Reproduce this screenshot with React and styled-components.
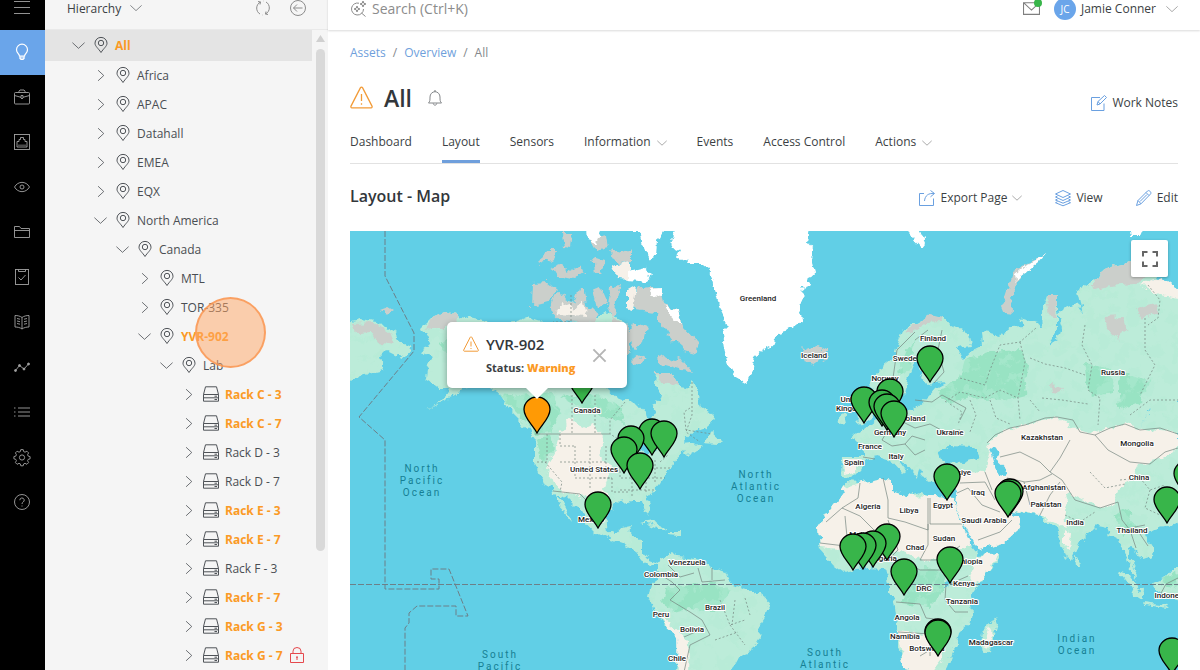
import styled, { createGlobalStyle } from "styled-components";

const GlobalStyle = createGlobalStyle`
  * {
    box-sizing: border-box;
  }

  body {
    margin: 0;
    overflow: hidden;
    background: #fff;
    color: #3b3f44;
    font-family: "Open Sans", "Noto Sans", sans-serif;
    font-size: 12px;
  }

  button, input, select {
    margin: 0;
    padding: 0;
    border: 0;
    background: none;
    color: inherit;
    font: inherit;
  }

  a {
    color: inherit;
    text-decoration: none;
  }

  svg {
    display: block;
    flex: none;
  }
`;

/* The shell starts slightly scrolled, so the bars are cut by the window top. */
const Shell = styled.div`
  display: grid;
  grid-template-columns: 45px 283px 1fr;
  height: calc(100vh + 15px);
  margin-top: -15px;
`;

const Rail = styled.nav`
  display: flex;
  flex-direction: column;
  background: #000;
`;

const RailButton = styled.button`
  display: flex;
  align-items: center;
  justify-content: center;
  height: 45px;
  padding: 0 2px 2px 0;
  background: ${(props) => (props.$active ? "#6aa5ea" : "transparent")};
  color: ${(props) => (props.$active ? "#fff" : "#a3a3a3")};
`;

const Sidebar = styled.aside`
  display: flex;
  flex-direction: column;
  min-height: 0;
  background: #f5f5f5;
`;

const SidebarHeader = styled.div`
  display: flex;
  align-items: center;
  flex: none;
  height: 45px;
  padding: 2px 22px 0;
  border-bottom: 1px solid #e9e9e9;
`;

const ViewSelect = styled.select`
  appearance: none;
  margin-right: 8px;
`;

const HeaderTools = styled.div`
  display: flex;
  gap: 19px;
  margin-left: auto;
  color: #8b8b8b;
`;

const SidebarBody = styled.div`
  display: flex;
  flex: 1;
  min-height: 0;
`;

const Tree = styled.ul`
  flex: 1;
  margin: 0;
  padding: 0;
  list-style: none;
  overflow: hidden;
`;

const TreeRow = styled.button`
  display: flex;
  align-items: center;
  width: 100%;
  height: ${(props) => (props.$selected ? 31 : 29)}px;
  padding-left: ${(props) => 27 + props.$depth * 22}px;
  padding-bottom: 1px;
  background: ${(props) => (props.$selected ? "#e4e4e4" : "transparent")};
  color: ${(props) => (props.$warning ? "#fb9a25" : "#4a4e53")};
  font-weight: ${(props) => (props.$warning ? 700 : 400)};
  white-space: nowrap;

  svg {
    color: #4f5358;
  }
`;

const RowIcon = styled.span`
  margin: 0 6px 0 8px;
`;

const LockIcon = styled.span`
  margin-left: 6px;

  svg {
    color: #e5484d;
  }
`;

const ScrollTrack = styled.div`
  display: flex;
  flex-direction: column;
  align-items: center;
  width: 16px;
  padding-top: 5px;
`;

const ScrollThumb = styled.div`
  width: 9px;
  height: 79%;
  margin-top: 7px;
  border-radius: 5px;
  background: #d9d9d9;
`;

const Main = styled.main`
  display: flex;
  flex-direction: column;
  min-width: 0;
`;

const TopBar = styled.header`
  display: flex;
  align-items: center;
  flex: none;
  height: 45px;
  padding: 2px 22px 0;
  box-shadow: 0 1px 2px rgba(0, 0, 0, 0.15);
`;

const SearchLabel = styled.label`
  display: flex;
  align-items: center;
  flex: 1;
  gap: 6px;
  color: #8c8c8c;
`;

const SearchInput = styled.input`
  flex: 1;
  font-size: 14px;
  outline: 0;

  &::placeholder {
    color: #8c8c8c;
    opacity: 1;
  }
`;

const MailButton = styled.button`
  position: relative;
  margin-right: 14px;
  color: #7f7f7f;

  &::after {
    content: "";
    position: absolute;
    top: -1px;
    right: -2px;
    width: 8px;
    height: 8px;
    border-radius: 50%;
    background: #38b54a;
  }
`;

const UserButton = styled.button`
  display: flex;
  align-items: center;
  gap: 5px;

  svg {
    margin-left: 5px;
    color: #8b8b8b;
  }
`;

const Avatar = styled.span`
  display: flex;
  align-items: center;
  justify-content: center;
  width: 22px;
  height: 22px;
  border-radius: 50%;
  background: #6aa5ea;
  color: #fff;
  font-size: 10px;
`;

const Content = styled.div`
  display: flex;
  flex: 1;
  flex-direction: column;
  min-height: 0;
  padding: 13px 22px 0;
`;

const Breadcrumbs = styled.nav`
  display: flex;
  gap: 7px;
  height: 20px;
  line-height: 20px;
  color: #85888b;

  a {
    color: #6f9fdc;
  }
`;

const TitleRow = styled.div`
  display: flex;
  align-items: center;
  height: 69px;
`;

const Title = styled.h1`
  margin: 0 15px 0 11px;
  font-size: 23px;
  font-weight: 600;
  line-height: 32px;
  color: #33373b;
`;

const WarningIcon = styled.span`
  color: #f29b38;
`;

const BellButton = styled.button`
  color: #85888b;
`;

const ActionButton = styled.button`
  display: flex;
  align-items: center;
  gap: 5px;

  svg:first-child {
    color: #6aa0e0;
  }

  svg:last-child:not(:first-child) {
    color: #a5a5a5;
  }
`;

const WorkNotes = styled(ActionButton)`
  margin: 10px 0 0 auto;
`;

const Tabs = styled.nav`
  display: flex;
  gap: 30px;
  height: 32px;
  border-bottom: 1px solid #e2e2e2;
`;

const Tab = styled.a`
  display: flex;
  gap: 6px;
  height: 31px;
  line-height: 20px;
  border-bottom: 3px solid ${(props) => (props.$active ? "#6f9fdc" : "transparent")};

  svg {
    margin-top: 6px;
    color: #a5a5a5;
  }
`;

const SectionHeader = styled.div`
  display: flex;
  align-items: center;
  gap: 33px;
  height: 67px;
`;

const SectionTitle = styled.h2`
  margin: 0 auto 0 0;
  padding-bottom: 4px;
  font-size: 16px;
  font-weight: 600;
  color: #33373b;
`;

const MapFrame = styled.section`
  position: relative;
  flex: 1;
  min-height: 0;
  overflow: hidden;
  background: #61cfe6;
`;

const MapDrawing = styled.svg`
  text {
    font-family: Roboto, sans-serif;
    text-anchor: middle;
  }
`;

const CountryLabel = styled.text`
  fill: #222;
  font-size: 8px;
  font-weight: 500;
  stroke: #fff;
  stroke-width: 2px;
  stroke-linejoin: round;
  paint-order: stroke;
`;

const OceanLabel = styled.text`
  fill: #167f94;
  font-size: 10px;
  letter-spacing: 2px;
`;

const FullscreenButton = styled.button`
  position: absolute;
  top: 9px;
  right: 10px;
  display: flex;
  align-items: center;
  justify-content: center;
  width: 37px;
  height: 37px;
  border-radius: 2px;
  background: #fff;
  color: #666;
  box-shadow: 0 1px 3px rgba(0, 0, 0, 0.3);
`;

const Popup = styled.div`
  position: absolute;
  top: 91px;
  left: 97px;
  display: flex;
  align-items: center;
  width: 180px;
  height: 66px;
  padding: 0 20px 0 16px;
  border-radius: 5px;
  background: #fff;
  box-shadow: 0 2px 6px rgba(0, 0, 0, 0.35);

  &::after {
    content: "";
    position: absolute;
    top: 100%;
    left: 79px;
    border: solid transparent;
    border-width: 11px 11px 0;
    border-top-color: #fff;
  }
`;

const PopupText = styled.div`
  display: grid;
  grid-template-columns: 23px 1fr;
  row-gap: 5px;
  flex: 1;
  align-items: center;
`;

const PopupTitle = styled.h3`
  margin: 0;
  font-size: 15px;
  font-weight: 600;
  line-height: 20px;
  color: #33373b;
`;

const PopupStatus = styled.p`
  grid-column: 2;
  margin: 0;
  font-size: 11px;
  font-weight: 700;
  line-height: 18px;
  white-space: nowrap;

  strong {
    color: #fb9a25;
  }
`;

const CloseButton = styled.button`
  color: #b5b5b5;
`;

const ClickSpot = styled.div`
  position: absolute;
  top: 297px;
  left: 195px;
  width: 71px;
  height: 71px;
  border: 2px solid rgba(250, 150, 80, 0.8);
  border-radius: 50%;
  background: rgba(255, 165, 100, 0.5);
  pointer-events: none;
`;

const icons = {
  menu: <path d="M0 2.500h16M0 8.500h16M0 14.500h16" />,
  bulb: (
    <>
      <path d="M5.500 12.200C5.500 10 2.500 9 2.500 5.700a5.500 5.500 0 0 1 11 0c0 3.300-3 4.300-3 6.500zM5.700 14h4.600" />
      <path d="M6 12.500v2l1 1h2l1-1v-2" />
    </>
  ),
  briefcase: (
    <>
      <rect x="0.500" y="3.500" width="15" height="11.500" rx="1" />
      <path d="M5 3.500V2.200L6 1h4l1 1.200v1.300M.500 6.500l6.500 1.800M15.500 6.500L9 8.300" />
      <path d="M7 6.500h2v2.500l-1 1-1-1z" />
    </>
  ),
  port: (
    <>
      <rect x="0.500" y="0.500" width="15" height="15" />
      <path d="M3 13V7.500h2V5.500h1.500V3.500h3v2H11v2h2V13zM5 12v-1.500M7 12v-1.500M9 12v-1.500M11 12v-1.500" />
    </>
  ),
  eye: (
    <>
      <path d="M.500 8C4 1.800 12 1.800 15.500 8 12 14.200 4 14.200.500 8z" />
      <circle cx="8" cy="8" r="2" />
    </>
  ),
  folder: <path d="M.500 13.500v-11h5l1.500 2h8.500v9zM.500 6.500H15.500" />,
  task: (
    <>
      <rect x="1.500" y="0.500" width="13" height="15" />
      <path d="M4.500.500v2h7v-2M4.500 8.500L7 11l4.500-5" />
    </>
  ),
  book: (
    <path d="M8 3.500C6 2 3.500 1.500 1 1.500V13c2.500 0 5 .500 7 2 2-1.500 4.500-2 7-2V1.500c-2.500 0-5 .500-7 2zM8 3.500V15M3 4.500l3 .700M3 7l3 .700M3 9.500l3 .700M13 4.500l-3 .700M13 7l-3 .700M13 9.500l-3 .700" />
  ),
  chart: (
    <>
      <path d="M1.500 11.500L5.500 6.500l4.500 3.500 4.500-5" />
      <g fill="currentColor">
        <circle cx="1.500" cy="11.500" r="1" />
        <circle cx="5.500" cy="6.500" r="1" />
        <circle cx="10" cy="10" r="1" />
        <circle cx="14.500" cy="5" r="1" />
      </g>
    </>
  ),
  list: <path d="M0 4h1.500M4 4h12M0 8h1.500M4 8h12M0 12h1.500M4 12h12" />,
  gear: (
    <>
      <path d="M6.800.600h2.400l.500 2 1.300.600 1.900-1 1.700 1.700-1 1.800.600 1.400 1.900.500v2.200l-1.900.600-.600 1.300 1 1.900-1.700 1.700-1.900-1-1.300.600-.500 1.900H6.800l-.500-1.900-1.300-.600-1.900 1-1.700-1.700 1-1.900-.600-1.300L-.1 9.800V7.600l1.900-.500.600-1.400-1-1.800 1.700-1.700 1.900 1 1.300-.600z" />
      <circle cx="8" cy="8.500" r="2.600" />
    </>
  ),
  help: (
    <>
      <circle cx="8" cy="8" r="7.500" />
      <path d="M5.800 6.200a2.200 2.200 0 1 1 3.300 1.900c-.700.500-1.100.900-1.100 1.900M8 11.500v1" />
    </>
  ),
  pin: (
    <>
      <path d="M8 15.500C5.500 11.500 2 9.300 2 6.200a6 5.800 0 0 1 12 0c0 3.100-3.500 5.300-6 9.300z" />
      <circle cx="8" cy="6" r="2.700" />
    </>
  ),
  rack: (
    <path d="M.500 8.500L2.500.800h11l2 7.700v6.700H.500zM.500 8.500h15M.500 11.800h15M11.500 10.200h2.500M11.500 13.500h2.500" />
  ),
  lock: (
    <>
      <path d="M1.500 6.500h13v9h-13zM4 6.500V4.200a4 3.700 0 0 1 8 0v2.300" />
      <path d="M8 9.500v3.500M7 10.200h2" />
    </>
  ),
  refresh: (
    <path d="M5 14C.500 11.500.500 4.500 5.500 2M5.500 2l-2.500-.500M5.500 2L5 4.500M11 2c4.500 2.500 4.500 9.500-.500 12M10.500 14l2.500.500M10.500 14l.500-2.500M8 1h.300M7.700 15H8" />
  ),
  back: (
    <>
      <circle cx="8" cy="8" r="7.500" />
      <path d="M12.500 8h-9M7 4.500L3.500 8 7 11.500" />
    </>
  ),
  search: (
    <path d="M9 2.200A6 6 0 1 0 13.500 8M11.500 12l4 3.500M13 0l.800 2.200L16 3l-2.200.800L13 6l-.800-2.200L10 3l2.200-.800zM7 5l.800 2.200L10 8l-2.200.800L7 11l-.800-2.200L4 8l2.200-.800z" />
  ),
  mail: <path d="M.500 2.500h15v11H.500zM.500 2.500L8 9.500l7.500-7" />,
  warning: (
    <path d="M8 .800c.400 0 .600.200.800.500l6.500 12.700c.300.600 0 1.200-.600 1.200H1.300c-.600 0-.900-.600-.600-1.200L7.200 1.300C7.400 1 7.600.800 8 .800zM8 5.500v5M8 12v1" />
  ),
  bell: (
    <path d="M1.500 13h13c-1.500-1.500-1.500-3-1.500-6a5 5.300 0 0 0-10 0c0 3 0 4.500-1.500 6zM6.200 13.300c.300 2.500 3.300 2.500 3.600 0M7.500 1.500V.700h1v.800" />
  ),
  note: (
    <path d="M9 2.500H.500v13h12.500V8.500M6 10l1-3.500L13.500.500l2 2L9 9zM7 6.500L9 9" />
  ),
  share: (
    <path d="M5 3.500H.500v12h14V8.500M11.500.500l4 3-4 3.300M15 3.500C9.500 3 6 5.500 5.500 11" />
  ),
  layers: (
    <path d="M8 .500l7.500 3.500L8 7.500.500 4zM2.500 6L.500 7 8 10.500 15.500 7l-2-1M2.500 9L.500 10 8 13.200l7.500-3.200-2-1M2.500 11.700l-2 1L8 15.800l7.500-3.100-2-1" />
  ),
  pencil: (
    <path d="M.500 15.500l1.500-5L11.500 1c1.500-1.500 4.500 1.500 3 3L5 13.800zM2 10.500l3 3.300M10 2.500l3 3M4 11.500l7-7" />
  ),
  close: <path d="M1.500 1.500l13 13M14.500 1.500l-13 13" />,
  fullscreen: (
    <path d="M1 5.500V1h4.500M10.500 1H15v4.500M15 10.500V15h-4.500M5.500 15H1v-4.500" />
  ),
  down: <path d="M.500 4.500L8 11.500l7.500-7" />,
  right: <path d="M5 1.500L12 8l-7 6.500" />,
};

function Icon({ name, size = 16, weight = 1 }) {
  return (
    <svg
      width={size}
      height={size}
      viewBox="0 0 16 16"
      overflow="visible"
      fill="none"
      stroke="currentColor"
      strokeWidth={weight}
      aria-hidden="true"
    >
      {icons[name]}
    </svg>
  );
}

const railItems = [
  ["menu", "Menu"],
  ["bulb", "Assets"],
  ["briefcase", "Projects"],
  ["port", "Ports"],
  ["eye", "Monitoring"],
  ["folder", "Files"],
  ["task", "Tasks"],
  ["book", "Catalog"],
  ["chart", "Reports"],
  ["list", "Logs"],
  ["gear", "Settings"],
  ["help", "Help"],
];

const treeItems = [
  { label: "All", depth: 0, open: true, warning: true, selected: true },
  { label: "Africa", depth: 1 },
  { label: "APAC", depth: 1 },
  { label: "Datahall", depth: 1 },
  { label: "EMEA", depth: 1 },
  { label: "EQX", depth: 1 },
  { label: "North America", depth: 1, open: true },
  { label: "Canada", depth: 2, open: true },
  { label: "MTL", depth: 3 },
  { label: "TOR-335", depth: 3 },
  { label: "YVR-902", depth: 3, open: true, warning: true },
  { label: "Lab", depth: 4, open: true },
  { label: "Rack C - 3", depth: 5, rack: true, warning: true },
  { label: "Rack C - 7", depth: 5, rack: true, warning: true },
  { label: "Rack D - 3", depth: 5, rack: true },
  { label: "Rack D - 7", depth: 5, rack: true },
  { label: "Rack E - 3", depth: 5, rack: true, warning: true },
  { label: "Rack E - 7", depth: 5, rack: true, warning: true },
  { label: "Rack F - 3", depth: 5, rack: true },
  { label: "Rack F - 7", depth: 5, rack: true, warning: true },
  { label: "Rack G - 3", depth: 5, rack: true, warning: true },
  { label: "Rack G - 7", depth: 5, rack: true, warning: true, locked: true },
];

const tabs = [
  { label: "Dashboard" },
  { label: "Layout", active: true },
  { label: "Sensors" },
  { label: "Information", menu: true },
  { label: "Events" },
  { label: "Access Control" },
  { label: "Actions", menu: true },
];

const land = [
  // North and Central America
  "M423 327L433 317 447 311 460 316 483 321 500 324 513 322 525 318 537 322 560 325 590 322 605 312 617 318 628 325 632 340 626 362 612 375 607 388 617 397 627 401 638 405 645 413 646 418 652 420 654 413 652 405 660 400 662 393 656 387 657 372 667 372 677 377 680 387 687 388 692 382 697 393 700 407 710 413 715 420 707 427 693 432 683 443 692 442 703 447 690 455 685 450 677 457 672 467 663 477 660 483 652 492 647 498 651 510 648 515 644 507 642 500 630 500 620 502 612 505 606 517 608 532 615 535 622 527 632 525 628 533 642 540 642 552 647 558 658 562 650 566 640 560 633 549 622 543 607 538 593 532 585 523 585 515 575 505 567 497 553 493 552 488 543 483 535 463 535 440 530 433 520 420 510 410 500 393 483 383 463 387 453 397 440 403 428 410 447 397 450 388 437 388 425 380 427 363 433 357 420 352 430 345z",
  "M555 495L560 507 572 522 568 512 560 497z",
  // Newfoundland
  "M703 443L712 432 722 441 718 444z",
  // Far east of Siberia
  "M348 323L360 320 377 322 393 330 400 343 412 348 403 358 387 350 380 357 383 370 370 373 348 382z",
  // Caribbean
  "M640 523L652 521 667 529 660 530 650 525z",
  "M668 532L680 532 680 536 668 535z",
  // South America
  "M658 562L673 552 678 557 703 560 712 568 725 572 730 583 743 588 757 592 770 602 768 610 760 623 758 640 752 650 740 655 733 667 730 675 675 675 677 663 678 637 663 623 655 610 648 597 652 583 658 573z",
  // Africa
  "M847 482L860 483 883 478 892 480 892 490 910 496 920 493 930 497 953 498 955 508 963 525 972 547 978 555 998 553 998 558 988 573 977 587 970 597 972 613 970 623 960 632 958 643 953 650 948 663 945 675 912 675 903 663 897 643 898 623 895 600 888 593 888 582 885 568 867 567 843 572 833 565 820 550 818 527 827 513 835 503 843 493z",
  "M995 617L997 623 990 650 983 653 981 643 983 632 990 625z",
  // Europe and Asia
  "M842 457L863 457 860 445 852 437 863 430 870 425 878 418 882 410 880 397 873 390 870 380 880 370 893 360 897 347 903 330 930 315 943 317 950 325 970 335 972 345 957 347 962 360 973 350 983 345 982 332 990 333 1000 335 1010 328 1025 327 1020 318 1037 323 1043 330 1042 313 1047 297 1057 297 1057 327 1050 345 1058 340 1062 327 1057 313 1063 308 1077 302 1083 313 1078 290 1093 280 1110 267 1130 262 1157 273 1150 287 1180 288 1180 522 1163 528 1143 533 1148 542 1153 550 1152 557 1143 560 1137 550 1130 547 1128 557 1137 573 1138 580 1130 570 1125 553 1120 540 1110 535 1107 527 1097 525 1080 542 1073 557 1068 562 1062 547 1057 528 1050 523 1040 515 1020 513 1010 510 997 500 992 500 1003 517 1010 518 1020 520 1018 530 1003 543 978 550 975 540 965 525 955 507 957 493 957 483 933 482 923 477 920 468 917 478 910 470 902 460 897 457 907 471 903 474 892 462 887 460 877 457 866 459 860 470 852 478 841 477z",
  "M860 388L868 386 866 396 872 405 873 418 865 423 852 424 858 418 856 408z",
  "M837 417L845 412 847 422 838 423z",
  // Indonesia and Sri Lanka
  "M1117 570L1130 575 1143 593 1143 600 1133 593 1126 580z",
  "M1153 583L1165 578 1175 567 1180 567 1180 600 1160 595z",
  "M1143 602L1170 605 1168 608 1145 605z",
  "M1075 556L1079 558 1080 566 1076 566z",
];

const tundra = [
  "M433 317L447 311 460 316 452 327 436 327 426 330z",
  "M352 324L376 323 390 332 395 345 380 343 372 332 356 333z",
  "M538 265L547 250 555 250 553 258 545 263z",
  "M563 233L572 233 570 248 565 247z",
  "M552 267L563 263 567 273 580 266 583 273 573 280 558 277z",
  "M593 258L605 262 602 273 595 273z",
  "M590 240L606 236 608 248 596 251z",
  "M610 250L622 253 632 249 632 262 618 264z",
  "M533 283L547 282 557 290 547 303 532 307z",
  "M550 311L555 294 560 292 565 300 573 304 579 290 585 290 587 305 597 313 595 324 560 322z",
  "M593 290L600 287 607 303 597 308z",
  "M610 287L620 285 617 297 613 320 608 307z",
  "M637 290L650 288 660 290 663 302 680 313 683 327 698 343 695 355 685 352 680 343 673 340 663 327 655 313 637 310 630 300z",
  "M657 355L673 360 680 357 692 372 680 369 658 363z",
  "M633 322L647 327 643 343 635 350 630 336z",
  "M634 354L647 360 640 366 633 364z",
  "M612 318L628 325 632 340 626 360 616 364 610 335z",
  "M657 372L667 372 677 377 680 387 668 384 659 381z",
  "M800 348L805 350 817 345 827 350 827 358 815 364 805 361z",
  "M906 331L930 314 943 317 940 323 925 324 912 333z",
  "M1045 255L1038 263 1020 277 1012 293 1013 313 1005 312 1002 305 1008 287 1013 273 1027 263z",
  "M1047 297L1057 297 1056 318 1050 316z",
  "M1093 280L1110 267 1130 262 1152 273 1135 284 1110 286 1096 290z",
  "M1103 317L1122 316 1126 328 1119 340 1108 330z",
  "M1135 309L1156 303 1158 312 1142 319z",
  "M380 310L388 307 393 310 388 313z",
  "M1050 384L1063 387 1060 393 1051 391z",
];

const ice = [
  "M667 225L675 236 670 247 680 252 677 258 687 263 702 263 710 270 713 283 717 297 720 310 728 327 722 333 725 353 728 363 735 377 747 384 752 373 755 357 763 350 773 345 778 333 790 330 803 320 800 308 805 297 800 292 810 285 807 277 815 273 812 263 813 250 807 243 811 225z",
  "M628 225L666 225 657 240 656 258 650 262 644 250 640 232 628 232z",
  "M587 229L600 229 597 243 588 240z",
  "M628 271L644 267 652 273 646 281 628 279z",
  "M650 290L660 289 661 296 652 295z",
  "M664 304L680 313 682 325 672 318z",
  "M1045 255L1038 263 1020 277 1015 283 1014 275 1027 264z",
  "M908 229L920 231 925 243 921 248 912 238z",
  "M1130 229L1143 229 1140 236 1132 236z",
];

const dryLand = [
  "M560 432L572 418 580 430 592 424 605 438 600 455 612 466 604 490 612 505 600 508 588 498 570 494 552 484 546 466 555 450z",
  "M556 314L562 302 575 310 583 300 588 316z",
  "M612 266L630 262 630 279 618 278z",
  "M627 292L636 287 633 310 627 308z",
  "M656 607L665 620 680 632 689 642 688 675 678 675 677 637 664 623z",
  "M845 488L860 483 883 478 892 480 892 490 910 496 930 497 953 498 955 508 963 525 972 545 955 548 945 556 925 562 905 553 890 550 870 556 850 550 820 547 818 527 827 513 835 503z",
  "M978 556L998 553 988 573 977 585 968 576z",
  "M898 631L925 634 945 640 942 660 930 675 912 675 903 663z",
  "M990 628L993 634 988 648 984 646z",
  "M843 460L860 460 856 472 844 474z",
  "M987 443L1013 427 1043 420 1057 417 1073 427 1093 433 1123 423 1150 430 1180 433 1180 446 1160 458 1140 464 1134 476 1118 490 1112 506 1097 507 1070 493 1064 510 1068 530 1056 523 1040 515 1010 510 1020 520 1018 530 1003 543 978 550 955 507 957 483 935 480 950 470 985 472 990 455z",
  "M1140 284L1160 276 1180 290 1180 299 1160 296z",
  "M1064 530L1072 535 1070 550 1064 545z",
];

const forest = [
  "M440 345L460 330 500 340 500 385 470 380z",
  "M500 394L520 396 550 392 560 410 552 432 535 434 515 412z",
  "M560 396L590 394 620 405 625 425 605 418 585 410z",
  "M536 440L550 436 553 450 541 462z",
  "M665 588L690 585 715 583 730 592 722 602 714 612 690 608 676 612 662 603z",
  "M905 574L925 566 944 575 944 592 930 606 902 602z",
  "M965 360L990 352 1020 350 1028 365 1025 395 1005 400 975 398 945 402 938 390 960 378z",
  "M1085 362L1110 370 1112 392 1090 396z",
  "M1120 372L1150 382 1140 402 1118 410z",
  "M1113 515L1128 508 1136 528 1124 536z",
  "M1160 582L1176 570 1178 588z",
  "M897 375L905 352 915 340 912 368z",
];

const water = [
  "M885 397L895 404 905 395 908 380 916 360 923 352 919 373 926 384 946 382 935 388 928 396 912 411 898 410z",
  "M938 452L950 446 975 447 980 458 962 463 942 462z",
  "M989 448L998 450 996 460 1005 468 1007 478 999 477 994 465z",
  "M637 446L648 443 657 452 648 456z",
  "M945 583L950 582 949 588 945 588z",
  "M1140 426L1150 414 1152 407 1147 418z",
];

const borders =
  "M535 434H610M553 491L580 494 592 506 604 516M658 573L672 582 680 590 670 600 690 612 702 620 710 635 690 645 684 672M698 568L702 582 725 580M712 568V580M684 637L700 630M668 565L680 577 694 573M842 508L860 516 874 530 895 534M860 483L858 498 842 508 826 522M883 478L888 500 888 518 905 522M905 522L928 530 928 498M930 498V524H962M928 524V545L920 560 940 560 960 546M888 520L898 550 888 560M845 516L848 548M820 543L845 546M858 560L862 540 880 548M900 560L920 570 945 570 950 584 968 576M946 584L945 600 955 612 968 612M896 602L920 604 926 618 943 620M898 632L930 634V656M920 656L940 644M915 400L932 402 942 395 955 402 966 408 960 420M903 422L915 428 930 424 945 432 960 430M880 420L888 430 882 440 892 446M863 457L875 459M892 446L905 444 915 455 925 450M905 444L912 436 925 440M934 383L944 372 938 350 942 330M915 340L928 330M893 378L897 350 915 332M987 443L995 435 1010 428 1025 425 1045 418 1057 417 1073 420 1080 432 1095 435 1110 428 1125 424 1140 430 1160 428 1178 434M1095 435L1108 450 1130 462 1150 464 1165 452 1178 448M1070 440L1060 458 1050 472 1062 480 1075 500 1100 508 1118 502M1000 457L1020 452 1040 462 1050 472M1007 478L1025 482 1040 480 1052 474M1024 482L1030 505M1040 515L1050 495 1060 482M960 483L985 482 995 500M957 493L968 488 982 505 1000 512M978 540L1000 532 1012 520M985 472L992 490M1118 502L1122 520 1130 530 1136 548M1130 528L1145 525M1136 528L1148 546M1160 595L1166 584 1178 578";

const regionBorders =
  "M571 295V322H553M572 395V434M595 395V434M625 402L610 420V434L620 440M547 434V462H537M560 434V446H575M575 446V478M590 446V490M560 462H606M606 446V470H625M600 478H612V492H628M575 478H612M620 455V478H640M632 470V498M646 470V494M655 460V484M640 478H665M652 468H672M660 462L668 455M620 490H655M545 462L562 482 560 492M692 382V415L686 432 700 442M690 408L684 412 686 430 712 434M945 402L960 392 985 398 1000 390 1018 398M960 378L985 385 990 370 1000 345 1020 342 1036 328M1020 342L1025 362 1018 398 1020 420M1030 358L1045 364 1065 368 1085 375M1085 325L1082 345 1092 365 1088 390M1145 318V350L1155 365 1140 395M1148 285L1160 300 1158 318 1148 325M1088 390L1100 398 1098 425M1130 415L1150 400H1178M950 404L962 412 958 425M970 400L976 415 970 432M990 400L996 418 1010 424M1030 400L1040 412M1042 398L1062 400 1088 404M1120 480L1140 478 1150 490 1165 485M1090 472L1105 488 1125 484M1150 490L1145 508 1160 515M1065 515L1080 522 1095 512M720 600L730 625 745 620M735 600L732 625M745 598L750 615M730 625L745 645M715 640L738 632";

const dateLine =
  "M385 231V276L414 333V351L359 417 385 440V589H439V579H431V569H449L468 616H456V606H417L409 613V623L405 628V675";

const countries = [
  ["Greenland", 758, 301],
  ["Iceland", 814, 358],
  ["Canada", 587, 413],
  ["United States", 594, 472],
  ["Mexico", 591, 522],
  ["Venezuela", 687, 565],
  ["Colombia", 661, 577],
  ["Peru", 661, 617],
  ["Brazil", 715, 610],
  ["Bolivia", 692, 632],
  ["Chile", 677, 661],
  ["Finland", 933, 341],
  ["Sweden", 907, 361],
  ["Norway", 885, 381],
  ["United", 852, 402],
  ["Kingdom", 852, 411],
  ["Poland", 913, 421],
  ["Germany", 890, 435],
  ["France", 870, 449],
  ["Spain", 854, 465],
  ["Italy", 896, 459],
  ["Ukraine", 950, 435],
  ["Russia", 1113, 375],
  ["Kazakhstan", 1042, 440],
  ["Mongolia", 1137, 446],
  ["China", 1139, 480],
  ["Türkiye", 958, 475],
  ["Iraq", 978, 495],
  ["Afghanistan", 1044, 490],
  ["Pakistan", 1046, 507],
  ["India", 1075, 525],
  ["Thailand", 1132, 533],
  ["Saudi Arabia", 984, 523],
  ["Egypt", 943, 508],
  ["Libya", 909, 513],
  ["Algeria", 868, 509],
  ["Mali", 857, 537],
  ["Sudan", 944, 541],
  ["Chad", 915, 550],
  ["Nigeria", 884, 561],
  ["Ethiopia", 968, 564],
  ["Kenya", 964, 586],
  ["DRC", 924, 591],
  ["Tanzania", 962, 604],
  ["Angola", 907, 620],
  ["Namibia", 905, 639],
  ["Botswana", 927, 651],
  ["Madagascar", 991, 645],
  ["Indonesia", 1172, 598],
];

const oceans = [
  ["North Pacific Ocean", 422, 472],
  ["North Atlantic Ocean", 756, 478],
  ["South Pacific Ocean", 500, 658],
  ["South Atlantic Ocean", 825, 656],
  ["Indian Ocean", 1077, 642],
];

const pins = [
  [582, 403],
  [652, 455],
  [664, 457],
  [631, 462],
  [624, 473],
  [640, 489],
  [598, 528],
  [930, 382],
  [890, 415],
  [864, 423],
  [882, 426],
  [887, 430],
  [894, 437],
  [947, 500],
  [1010, 515],
  [1008, 517],
  [1187, 497],
  [1167, 523],
  [887, 560],
  [873, 567],
  [863, 569],
  [853, 570],
  [904, 595],
  [950, 583],
  [938, 655],
  [938, 656],
  [1172, 674],
];

const pinShape =
  "M0 0C-5 -9 -13 -15 -13 -23.500A13 12.500 0 0 1 13 -23.500C13 -15 5 -9 0 0z";

function WorldMap() {
  return (
    <MapDrawing width="828" height="439" role="img" aria-label="World map">
      <defs>
        <filter id="coast" x="0" y="0" width="100%" height="100%">
          <feTurbulence type="fractalNoise" baseFrequency="0.120" numOctaves="3" seed="4" />
          <feDisplacementMap in="SourceGraphic" scale="9" xChannelSelector="R" yChannelSelector="G" />
        </filter>
        <filter id="speckle" x="0" y="0" width="100%" height="100%">
          <feTurbulence type="fractalNoise" baseFrequency="0.070" numOctaves="4" seed="9" />
          <feColorMatrix values="0 0 0 0 0.450  0 0 0 0 0.840  0 0 0 0 0.660  12 0 0 0 -6.200" />
        </filter>
        <clipPath id="greenClip">
          <path d={land.join("")} />
        </clipPath>
      </defs>
      <g transform="translate(-350 -231)">
        <g filter="url(#coast)">
          <path d={land.join("")} fill="#bcecd9" />
          <path d={forest.join("")} fill="#98e3c3" />
          <g clipPath="url(#greenClip)" opacity="0.450">
            <rect x="350" y="231" width="828" height="439" filter="url(#speckle)" />
          </g>
          <path d={tundra.join("")} fill="#cbcfcb" />
          <path d={dryLand.join("")} fill="#f6f1e9" />
          <path d={ice.join("")} fill="#fff" />
          <path d={water.join("")} fill="#61cfe6" />
        </g>
        <g fill="none" stroke="#75857f" strokeWidth="0.700">
          <path d={borders} />
          <path d={regionBorders} strokeDasharray="2 2" />
        </g>
        <g fill="none" stroke="#6d7f88" strokeWidth="1" strokeDasharray="6 2">
          <path d={dateLine} />
          <path d="M350 584.500H1178" />
        </g>
        {countries.map(([name, x, y]) => (
          <CountryLabel key={name} x={x} y={y}>
            {name}
          </CountryLabel>
        ))}
        {oceans.map(([name, x, y]) => (
          <OceanLabel key={name} y={y}>
            {name.split(" ").map((word, i) => (
              <tspan key={word} x={x} dy={i ? 12 : 0}>
                {word}
              </tspan>
            ))}
          </OceanLabel>
        ))}
        <g fill="#38b54a" stroke="#000" strokeWidth="1.300">
          {pins.map(([x, y], i) => (
            <path key={i} d={pinShape} transform={`translate(${x} ${y})`} />
          ))}
          <path d={pinShape} transform="translate(537 433)" fill="#ff9a05" />
        </g>
      </g>
    </MapDrawing>
  );
}

function HierarchyPanel() {
  return (
    <Sidebar>
      <SidebarHeader>
        <ViewSelect aria-label="Tree view">
          <option>Hierarchy</option>
        </ViewSelect>
        <Icon name="down" size={12} weight={0.8} />
        <HeaderTools>
          <button aria-label="Refresh">
            <Icon name="refresh" />
          </button>
          <button aria-label="Collapse panel">
            <Icon name="back" />
          </button>
        </HeaderTools>
      </SidebarHeader>
      <SidebarBody>
        <Tree>
          {treeItems.map((item) => (
            <li key={item.label}>
              <TreeRow
                $depth={item.depth}
                $selected={item.selected}
                $warning={item.warning}
                aria-expanded={Boolean(item.open)}
              >
                <Icon name={item.open ? "down" : "right"} size={13} />
                <RowIcon>
                  <Icon name={item.rack ? "rack" : "pin"} />
                </RowIcon>
                {item.label}
                {item.locked && (
                  <LockIcon>
                    <Icon name="lock" />
                  </LockIcon>
                )}
              </TreeRow>
            </li>
          ))}
        </Tree>
        <ScrollTrack>
          <svg width="9" height="7" fill="#d0d0d0" aria-hidden="true">
            <path d="M4.500 0L9 7H0z" />
          </svg>
          <ScrollThumb />
        </ScrollTrack>
      </SidebarBody>
    </Sidebar>
  );
}

export default function App() {
  return (
    <>
      <GlobalStyle />
      <Shell>
        <Rail>
          {railItems.map(([name, label]) => (
            <RailButton key={name} $active={name === "bulb"} aria-label={label}>
              <Icon name={name} weight={name === "bulb" ? 1.2 : 0.9} />
            </RailButton>
          ))}
        </Rail>

        <HierarchyPanel />

        <Main>
          <TopBar>
            <SearchLabel>
              <Icon name="search" />
              <SearchInput type="search" placeholder="Search (Ctrl+K)" aria-label="Search" />
            </SearchLabel>
            <MailButton aria-label="Messages">
              <Icon name="mail" size={17} />
            </MailButton>
            <UserButton>
              <Avatar>JC</Avatar>
              Jamie Conner
              <Icon name="down" size={12} />
            </UserButton>
          </TopBar>

          <Content>
            <Breadcrumbs aria-label="Breadcrumb">
              <a href="#assets">Assets</a>
              <span>/</span>
              <a href="#overview">Overview</a>
              <span>/</span>
              <span>All</span>
            </Breadcrumbs>

            <TitleRow>
              <WarningIcon>
                <Icon name="warning" size={23} weight={0.9} />
              </WarningIcon>
              <Title>All</Title>
              <BellButton aria-label="Notifications">
                <Icon name="bell" />
              </BellButton>
              <WorkNotes>
                <Icon name="note" />
                Work Notes
              </WorkNotes>
            </TitleRow>

            <Tabs>
              {tabs.map((tab) => (
                <Tab key={tab.label} href={`#${tab.label}`} $active={tab.active}>
                  {tab.label}
                  {tab.menu && <Icon name="down" size={10} weight={1.5} />}
                </Tab>
              ))}
            </Tabs>

            <SectionHeader>
              <SectionTitle>Layout - Map</SectionTitle>
              <ActionButton>
                <Icon name="share" />
                Export Page
                <Icon name="down" size={10} weight={1.5} />
              </ActionButton>
              <ActionButton>
                <Icon name="layers" />
                View
              </ActionButton>
              <ActionButton>
                <Icon name="pencil" />
                Edit
              </ActionButton>
            </SectionHeader>

            <MapFrame>
              <WorldMap />
              <Popup>
                <PopupText>
                  <WarningIcon>
                    <Icon name="warning" />
                  </WarningIcon>
                  <PopupTitle>YVR-902</PopupTitle>
                  <PopupStatus>
                    Status: <strong>Warning</strong>
                  </PopupStatus>
                </PopupText>
                <CloseButton aria-label="Close">
                  <Icon name="close" size={15} weight={2} />
                </CloseButton>
              </Popup>
              <FullscreenButton aria-label="Toggle fullscreen">
                <Icon name="fullscreen" weight={2} />
              </FullscreenButton>
            </MapFrame>
          </Content>
        </Main>
      </Shell>
      <ClickSpot />
    </>
  );
}
